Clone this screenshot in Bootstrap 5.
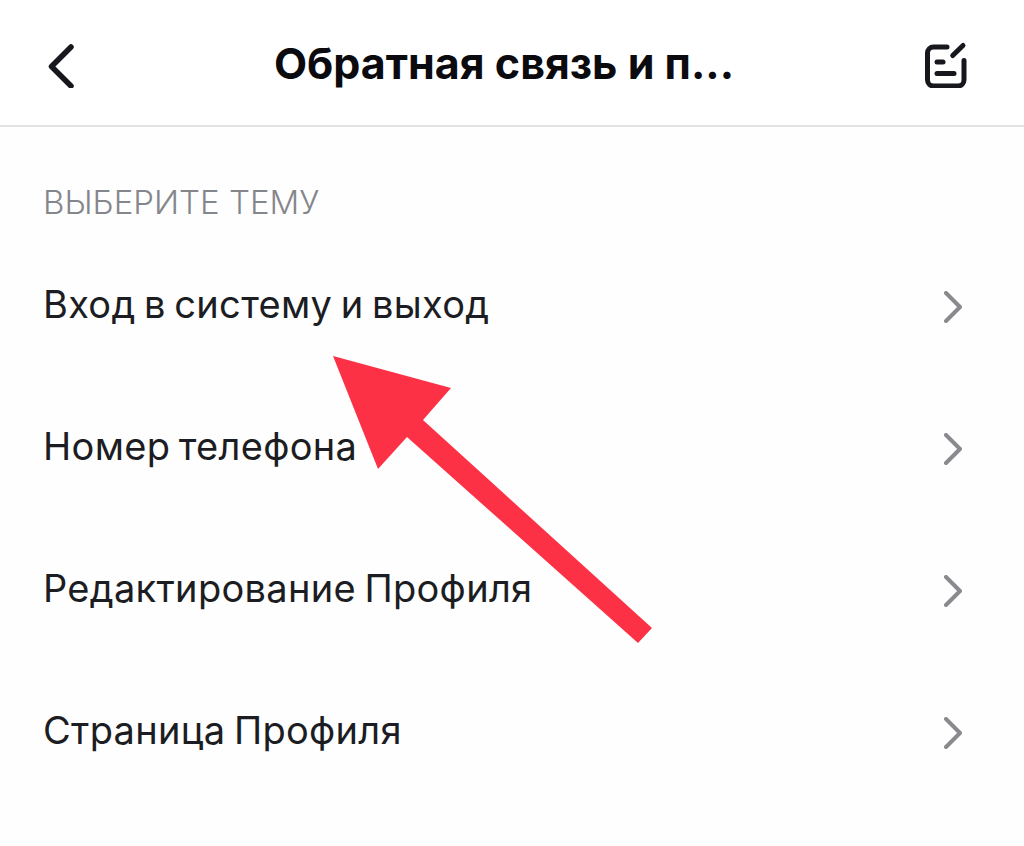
<!DOCTYPE html>
<html lang="ru">
<head>
    <meta charset="UTF-8">
    <meta name="viewport" content="width=device-width, initial-scale=1.0">
    <title>Обратная связь и помощь</title>
    <link href="https://cdn.jsdelivr.net/npm/bootstrap@5.3.0/dist/css/bootstrap.min.css" rel="stylesheet">
    <style>
        body {
            background-color: #fefefe;
            font-family: "Inter", "Noto Sans", sans-serif;
            color: #1c1d22;
            overflow: hidden;
        }
        .screen {
            height: 846px;
        }
        .top-bar {
            height: 127px;
            padding: 2px 56px 0 44px;
            background: #fff;
            border-bottom: 2px solid #e3e3e3;
        }
        .top-title {
            font-size: 43px;
            font-weight: 700;
            color: #0b0b0f;
            line-height: 1;
            margin: 0 0 0 10px;
        }
        .topic-label {
            font-size: 33px;
            font-weight: 300;
            line-height: 40px;
            color: #85868c;
            padding: 55px 43px 0;
        }
        .topic-list {
            padding-top: 14px;
        }
        .topic-item {
            height: 142px;
            padding: 0 62px 0 43px;
            font-size: 38px;
            font-weight: 400;
            letter-spacing: 0.3px;
            word-spacing: -2.5px;
            color: #1c1d22;
            background: transparent;
            border: 0;
        }
        .topic-text {
            padding-bottom: 6px;
        }
        .red-arrow {
            position: absolute;
            top: 0;
            left: 0;
        }
    </style>
</head>
<body>
    <div class="screen position-relative">
        <header class="top-bar d-flex align-items-center justify-content-between">
            <svg width="32" height="48" viewBox="0 0 32 48" fill="none" stroke="#17181d" stroke-width="5.5" stroke-linecap="round" stroke-linejoin="round">
                <path d="M27 7 7.500 26.500 27 46"/>
            </svg>
            <h1 class="top-title">Обратная связь и п...</h1>
            <svg width="46" height="48" viewBox="0 0 46 48" fill="none" stroke="#17181d" stroke-width="5" stroke-linecap="round" stroke-linejoin="round">
                <path d="M25 7H11.500a6 6 0 0 0-6 6v27a6 6 0 0 0 6 6H36a6 6 0 0 0 6-6V20.500"/>
                <path d="M30.700 15.500 41 5.500"/>
                <path d="M15 22h6"/>
                <path d="M15 33.500h17"/>
            </svg>
        </header>

        <div class="topic-label">ВЫБЕРИТЕ ТЕМУ</div>

        <div class="list-group list-group-flush topic-list">
            <div class="list-group-item topic-item d-flex align-items-center justify-content-between">
                <span class="topic-text">Вход в систему и выход</span>
                <svg width="18" height="32" viewBox="0 0 18 32" fill="none" stroke="#8a8a8e" stroke-width="4" stroke-linecap="round" stroke-linejoin="round"><path d="M2 2l14 14L2 30"/></svg>
            </div>
            <div class="list-group-item topic-item d-flex align-items-center justify-content-between">
                <span class="topic-text">Номер телефона</span>
                <svg width="18" height="32" viewBox="0 0 18 32" fill="none" stroke="#8a8a8e" stroke-width="4" stroke-linecap="round" stroke-linejoin="round"><path d="M2 2l14 14L2 30"/></svg>
            </div>
            <div class="list-group-item topic-item d-flex align-items-center justify-content-between">
                <span class="topic-text">Редактирование Профиля</span>
                <svg width="18" height="32" viewBox="0 0 18 32" fill="none" stroke="#8a8a8e" stroke-width="4" stroke-linecap="round" stroke-linejoin="round"><path d="M2 2l14 14L2 30"/></svg>
            </div>
            <div class="list-group-item topic-item d-flex align-items-center justify-content-between">
                <span class="topic-text">Страница Профиля</span>
                <svg width="18" height="32" viewBox="0 0 18 32" fill="none" stroke="#8a8a8e" stroke-width="4" stroke-linecap="round" stroke-linejoin="round"><path d="M2 2l14 14L2 30"/></svg>
            </div>
        </div>

        <!-- arrow lies over the list -->
        <svg class="red-arrow" width="1024" height="846" viewBox="0 0 1024 846">
            <polygon fill="#fd3145" points="333,356 451,388 423,420 652,628 638,643 407,437 378,469"/>
        </svg>
    </div>
</body>
</html>
